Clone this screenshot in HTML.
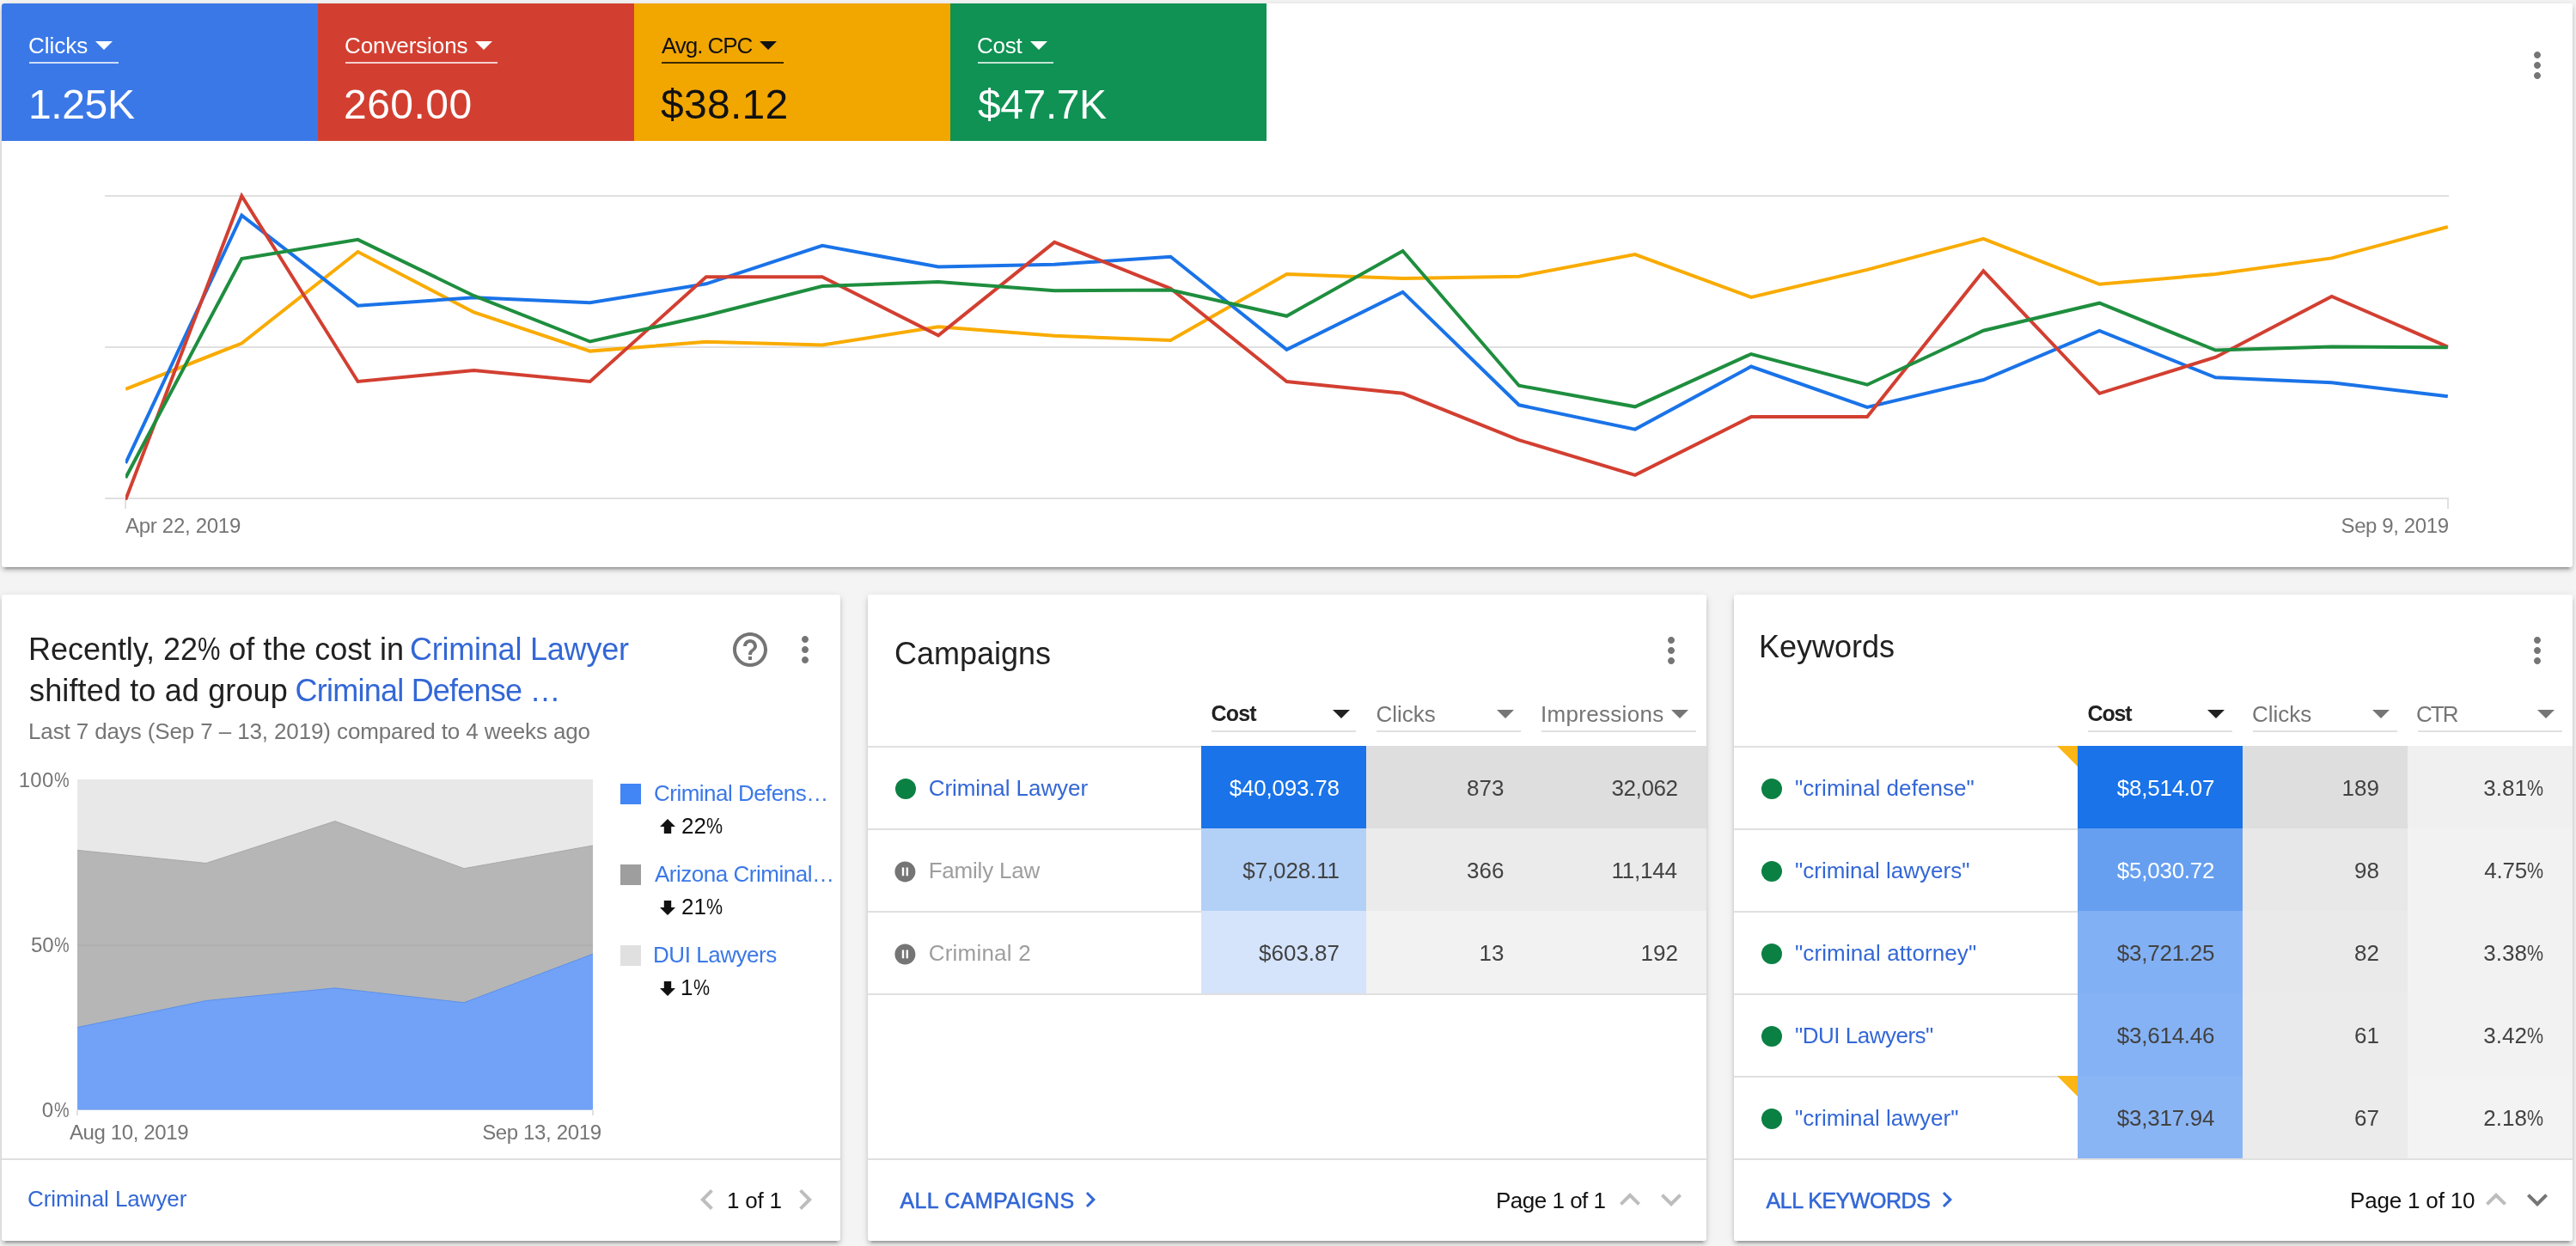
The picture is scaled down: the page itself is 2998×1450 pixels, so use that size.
<!DOCTYPE html>
<html><head><meta charset="utf-8"><title>Overview</title><style>
html,body{margin:0;padding:0}
body{width:2998px;height:1450px;background:#f4f4f4;overflow:hidden;position:relative;font-family:"Liberation Sans",sans-serif}
.b{position:absolute;display:block}
.t{position:absolute;white-space:pre;display:block}
.pc{display:inline-block;transform:scaleX(.824);transform-origin:0 50%;margin-right:-.156em}
#tx{position:absolute;left:0;top:0;width:2998px;height:1450px;will-change:transform}
.card{position:absolute;background:#fff;border-radius:3px;box-shadow:0 6px 2px -4px rgba(0,0,0,.2),0 4px 4px 0 rgba(0,0,0,.14),0 2px 10px 0 rgba(0,0,0,.12)}
</style></head><body>
<div class="card" style="left:2px;top:4px;width:2992px;height:656px"></div>
<div class="card" style="left:2px;top:692px;width:976px;height:752px"></div>
<div class="card" style="left:1010px;top:692px;width:976px;height:752px"></div>
<div class="card" style="left:2018px;top:692px;width:976px;height:752px"></div>
<div class="b" style="left:2px;top:4px;width:368px;height:160px;background:#3b78e7;border-top-left-radius:3px;"></div>
<div class="b" style="left:34px;top:72px;width:104px;height:2px;background:rgba(255,255,255,.75);"></div>
<div class="b" style="left:370px;top:4px;width:368px;height:160px;background:#d23f31;"></div>
<div class="b" style="left:402px;top:72px;width:177.4px;height:2px;background:rgba(255,255,255,.75);"></div>
<div class="b" style="left:738px;top:4px;width:368px;height:160px;background:#f2a600;"></div>
<div class="b" style="left:770px;top:72px;width:141.9px;height:2px;background:rgba(0,0,0,.75);"></div>
<div class="b" style="left:1106px;top:4px;width:368px;height:160px;background:#0f9254;"></div>
<div class="b" style="left:1138px;top:72px;width:87.7px;height:2px;background:rgba(255,255,255,.75);"></div>
<svg class="b" style="left:96.8px;top:27.8px" width="48" height="48" viewBox="0 0 24 24"><path d="M7 10l5 5 5-5z" fill="#fff"/></svg>
<svg class="b" style="left:538.5px;top:27.8px" width="48" height="48" viewBox="0 0 24 24"><path d="M7 10l5 5 5-5z" fill="#fff"/></svg>
<svg class="b" style="left:869.8px;top:27.8px" width="48" height="48" viewBox="0 0 24 24"><path d="M7 10l5 5 5-5z" fill="#111"/></svg>
<svg class="b" style="left:1185.3px;top:27.8px" width="48" height="48" viewBox="0 0 24 24"><path d="M7 10l5 5 5-5z" fill="#fff"/></svg>
<svg class="b" style="left:2929px;top:52px" width="48" height="48" viewBox="0 0 24 24"><path d="M12 8c1.1 0 2-.9 2-2s-.9-2-2-2-2 .9-2 2 .9 2 2 2zm0 2c-1.1 0-2 .9-2 2s.9 2 2 2 2-.9 2-2-.9-2-2-2zm0 6c-1.1 0-2 .9-2 2s.9 2 2 2 2-.9 2-2-.9-2-2-2z" fill="#757575"/></svg>
<svg class="b" style="left:0;top:0" width="2998" height="680" viewBox="0 0 2998 680"><defs><clipPath id="cp"><rect x="146" y="200" width="2704" height="400"/></clipPath></defs><rect x="122" y="227" width="2728" height="2" fill="#e0e0e0"/><rect x="122" y="403" width="2728" height="2" fill="#e0e0e0"/><rect x="122" y="579" width="2728" height="2" fill="#e0e0e0"/><rect x="145" y="580" width="2" height="12" fill="#e0e0e0"/><rect x="2848" y="580" width="2" height="12" fill="#e0e0e0"/><g clip-path="url(#cp)"><polyline points="146.2,452.8 281.3,399.5 416.5,293.0 551.6,363.5 686.7,408.6 821.8,397.8 957.0,401.5 1092.1,380.3 1227.2,390.7 1362.4,396.1 1497.5,319.0 1632.6,324.0 1767.8,321.7 1902.9,296.0 2038.0,345.9 2173.1,313.9 2308.3,277.8 2443.4,330.8 2578.5,319.0 2713.7,300.4 2848.8,264.0" fill="none" stroke="#f9ab00" stroke-width="4" stroke-linejoin="miter" stroke-linecap="butt"/><polyline points="146.2,539.0 281.3,250.6 416.5,355.7 551.6,346.3 686.7,352.3 821.8,330.3 957.0,285.9 1092.1,310.5 1227.2,307.8 1362.4,298.7 1497.5,406.9 1632.6,339.9 1767.8,471.3 1902.9,499.6 2038.0,426.5 2173.1,474.0 2308.3,442.0 2443.4,385.0 2578.5,439.3 2713.7,445.3 2848.8,461.2" fill="none" stroke="#1a73e8" stroke-width="4" stroke-linejoin="miter" stroke-linecap="butt"/><polyline points="146.2,581.5 281.3,228.0 416.5,444.0 551.6,430.9 686.7,444.0 821.8,322.3 957.0,322.3 1092.1,390.4 1227.2,281.9 1362.4,335.8 1497.5,444.0 1632.6,457.8 1767.8,512.1 1902.9,552.8 2038.0,485.1 2173.1,485.1 2308.3,315.3 2443.4,457.8 2578.5,415.7 2713.7,344.9 2848.8,403.6" fill="none" stroke="#d23f31" stroke-width="4" stroke-linejoin="miter" stroke-linecap="butt"/><polyline points="146.2,556.0 281.3,301.1 416.5,278.9 551.6,344.2 686.7,397.5 821.8,367.2 957.0,333.1 1092.1,328.0 1227.2,338.2 1362.4,337.5 1497.5,367.8 1632.6,292.0 1767.8,448.7 1902.9,473.3 2038.0,412.0 2173.1,447.7 2308.3,384.7 2443.4,352.7 2578.5,407.6 2713.7,403.6 2848.8,404.2" fill="none" stroke="#1e8e3e" stroke-width="4" stroke-linejoin="miter" stroke-linecap="butt"/></g></svg>
<svg class="b" style="left:849px;top:732px" width="48" height="48" viewBox="0 0 24 24"><path d="M11 18h2v-2h-2v2zm1-16C6.48 2 2 6.48 2 12s4.48 10 10 10 10-4.48 10-10S17.52 2 12 2zm0 18c-4.41 0-8-3.59-8-8s3.59-8 8-8 8 3.59 8 8-3.59 8-8 8zm0-14c-2.21 0-4 1.79-4 4h2c0-1.1.9-2 2-2s2 .9 2 2c0 2-3 1.75-3 5h2c0-2.25 3-2.5 3-5 0-2.21-1.79-4-4-4z" fill="#757575"/></svg>
<svg class="b" style="left:913px;top:732px" width="48" height="48" viewBox="0 0 24 24"><path d="M12 8c1.1 0 2-.9 2-2s-.9-2-2-2-2 .9-2 2 .9 2 2 2zm0 2c-1.1 0-2 .9-2 2s.9 2 2 2 2-.9 2-2-.9-2-2-2zm0 6c-1.1 0-2 .9-2 2s.9 2 2 2 2-.9 2-2-.9-2-2-2z" fill="#757575"/></svg>
<svg class="b" style="left:0;top:880px" width="1000" height="440" viewBox="0 880 1000 440"><rect x="90" y="907" width="600" height="384.5" fill="#e8e8e8"/><polygon points="90,989.4 240,1004.5 390,955.6 540,1010.7 690,984 690,1291.5 90,1291.5" fill="#b6b6b6"/><polyline points="90,989.4 240,1004.5 390,955.6 540,1010.7 690,984" fill="none" stroke="#a8a8a8" stroke-width="1"/><rect x="90" y="1099" width="600" height="2" fill="rgba(0,0,0,.035)"/><polygon points="90,1195.6 240,1164.5 390,1149.8 540,1166.8 690,1110.2 690,1291.5 90,1291.5" fill="#71a2f7"/><polyline points="90,1195.6 240,1164.5 390,1149.8 540,1166.8 690,1110.2" fill="none" stroke="#5b90ea" stroke-width="1"/><rect x="89" y="1291" width="2" height="7" fill="#e0e0e0"/><rect x="689" y="1291" width="2" height="7" fill="#e0e0e0"/></svg>
<div class="b" style="left:722px;top:912px;width:24px;height:24px;background:#4285f4;"></div>
<div class="b" style="left:722px;top:1006px;width:24px;height:24px;background:#9e9e9e;"></div>
<div class="b" style="left:722px;top:1100px;width:24px;height:24px;background:#e0e0e0;"></div>
<svg class="b" style="left:768px;top:952.8px" width="18" height="17" viewBox="0 0 18 17"><path d="M9 0 L18 9 H13.2 V17 H4.8 V9 H0 Z" fill="#111"/></svg>
<svg class="b" style="left:768px;top:1047.8px" width="18" height="17" viewBox="0 0 18 17"><path d="M9 17 L18 8 H13.2 V0 H4.8 V8 H0 Z" fill="#111"/></svg>
<svg class="b" style="left:768px;top:1141.8px" width="18" height="17" viewBox="0 0 18 17"><path d="M9 17 L18 8 H13.2 V0 H4.8 V8 H0 Z" fill="#111"/></svg>
<div class="b" style="left:2px;top:1348px;width:976px;height:2px;background:#e0e0e0;"></div>
<svg class="b" style="left:799px;top:1372px" width="48" height="48" viewBox="0 0 24 24"><path d="M15.41 7.41L14 6l-6 6 6 6 1.41-1.41L10.83 12z" fill="#bdbdbd"/></svg>
<svg class="b" style="left:913px;top:1372px" width="48" height="48" viewBox="0 0 24 24"><path d="M10 6L8.59 7.41 13.17 12l-4.58 4.59L10 18l6-6z" fill="#bdbdbd"/></svg>
<div class="b" style="left:1010px;top:868px;width:388px;height:2px;background:#e0e0e0;"></div><div class="b" style="left:1398px;top:868px;width:192px;height:96px;background:#1a73e8;"></div><div class="b" style="left:1590px;top:868px;width:192px;height:96px;background:#dedede;"></div><div class="b" style="left:1782px;top:868px;width:204px;height:96px;background:#dedede;"></div><div class="b" style="left:1010px;top:964px;width:388px;height:2px;background:#e0e0e0;"></div><div class="b" style="left:1398px;top:964px;width:192px;height:96px;background:#b3d0f7;"></div><div class="b" style="left:1590px;top:964px;width:192px;height:96px;background:#ebebeb;"></div><div class="b" style="left:1782px;top:964px;width:204px;height:96px;background:#ebebeb;"></div><div class="b" style="left:1010px;top:1060px;width:388px;height:2px;background:#e0e0e0;"></div><div class="b" style="left:1398px;top:1060px;width:192px;height:96px;background:#d5e4fb;"></div><div class="b" style="left:1590px;top:1060px;width:192px;height:96px;background:#f2f2f2;"></div><div class="b" style="left:1782px;top:1060px;width:204px;height:96px;background:#f2f2f2;"></div><div class="b" style="left:1010px;top:1156px;width:976px;height:2px;background:#e0e0e0;"></div>
<div class="b" style="left:2018px;top:868px;width:400px;height:2px;background:#e0e0e0;"></div><div class="b" style="left:2418px;top:868px;width:192px;height:96px;background:#1a73e8;"></div><div class="b" style="left:2610px;top:868px;width:192px;height:96px;background:#dedede;"></div><div class="b" style="left:2802px;top:868px;width:192px;height:96px;background:#f0f0f0;"></div><div class="b" style="left:2018px;top:964px;width:400px;height:2px;background:#e0e0e0;"></div><div class="b" style="left:2418px;top:964px;width:192px;height:96px;background:#669ff0;"></div><div class="b" style="left:2610px;top:964px;width:192px;height:96px;background:#e8e8e8;"></div><div class="b" style="left:2802px;top:964px;width:192px;height:96px;background:#f2f2f2;"></div><div class="b" style="left:2018px;top:1060px;width:400px;height:2px;background:#e0e0e0;"></div><div class="b" style="left:2418px;top:1060px;width:192px;height:96px;background:#82b0f4;"></div><div class="b" style="left:2610px;top:1060px;width:192px;height:96px;background:#eaeaea;"></div><div class="b" style="left:2802px;top:1060px;width:192px;height:96px;background:#f2f2f2;"></div><div class="b" style="left:2018px;top:1156px;width:400px;height:2px;background:#e0e0e0;"></div><div class="b" style="left:2418px;top:1156px;width:192px;height:96px;background:#85b2f4;"></div><div class="b" style="left:2610px;top:1156px;width:192px;height:96px;background:#ebebeb;"></div><div class="b" style="left:2802px;top:1156px;width:192px;height:96px;background:#f2f2f2;"></div><div class="b" style="left:2018px;top:1252px;width:400px;height:2px;background:#e0e0e0;"></div><div class="b" style="left:2418px;top:1252px;width:192px;height:96px;background:#8ab5f5;"></div><div class="b" style="left:2610px;top:1252px;width:192px;height:96px;background:#ebebeb;"></div><div class="b" style="left:2802px;top:1252px;width:192px;height:96px;background:#f3f3f3;"></div>
<div class="b" style="left:1410.3px;top:850px;width:167.3px;height:2px;background:#e0e0e0;"></div>
<div class="b" style="left:1602px;top:850px;width:167.8px;height:2px;background:#e0e0e0;"></div>
<div class="b" style="left:1794.3px;top:850px;width:179.3px;height:2px;background:#e0e0e0;"></div>
<div class="b" style="left:2429.7px;top:850px;width:168.1px;height:2px;background:#e0e0e0;"></div>
<div class="b" style="left:2621.8px;top:850px;width:168.2px;height:2px;background:#e0e0e0;"></div>
<div class="b" style="left:2813.6px;top:850px;width:168.1px;height:2px;background:#e0e0e0;"></div>
<svg class="b" style="left:1537px;top:806px" width="48" height="48" viewBox="0 0 24 24"><path d="M7 10l5 5 5-5z" fill="#212121"/></svg>
<svg class="b" style="left:1728px;top:806px" width="48" height="48" viewBox="0 0 24 24"><path d="M7 10l5 5 5-5z" fill="#757575"/></svg>
<svg class="b" style="left:1931px;top:806px" width="48" height="48" viewBox="0 0 24 24"><path d="M7 10l5 5 5-5z" fill="#757575"/></svg>
<svg class="b" style="left:2555.4px;top:806px" width="48" height="48" viewBox="0 0 24 24"><path d="M7 10l5 5 5-5z" fill="#212121"/></svg>
<svg class="b" style="left:2747px;top:806px" width="48" height="48" viewBox="0 0 24 24"><path d="M7 10l5 5 5-5z" fill="#757575"/></svg>
<svg class="b" style="left:2939px;top:806px" width="48" height="48" viewBox="0 0 24 24"><path d="M7 10l5 5 5-5z" fill="#757575"/></svg>
<svg class="b" style="left:1921px;top:732.5px" width="48" height="48" viewBox="0 0 24 24"><path d="M12 8c1.1 0 2-.9 2-2s-.9-2-2-2-2 .9-2 2 .9 2 2 2zm0 2c-1.1 0-2 .9-2 2s.9 2 2 2 2-.9 2-2-.9-2-2-2zm0 6c-1.1 0-2 .9-2 2s.9 2 2 2 2-.9 2-2-.9-2-2-2z" fill="#757575"/></svg>
<svg class="b" style="left:2929px;top:732.5px" width="48" height="48" viewBox="0 0 24 24"><path d="M12 8c1.1 0 2-.9 2-2s-.9-2-2-2-2 .9-2 2 .9 2 2 2zm0 2c-1.1 0-2 .9-2 2s.9 2 2 2 2-.9 2-2-.9-2-2-2zm0 6c-1.1 0-2 .9-2 2s.9 2 2 2 2-.9 2-2-.9-2-2-2z" fill="#757575"/></svg>
<div class="b" style="left:1042px;top:906px;width:24px;height:24px;border-radius:50%;background:#0b8043"></div>
<svg class="b" style="left:1039.4px;top:999.7px" width="28.8" height="28.8" viewBox="0 0 24 24"><path d="M12 2C6.48 2 2 6.48 2 12s4.48 10 10 10 10-4.48 10-10S17.52 2 12 2zm-1 14H9V8h2v8zm4 0h-2V8h2v8z" fill="#757575"/></svg>
<svg class="b" style="left:1039.4px;top:1095.7px" width="28.8" height="28.8" viewBox="0 0 24 24"><path d="M12 2C6.48 2 2 6.48 2 12s4.48 10 10 10 10-4.48 10-10S17.52 2 12 2zm-1 14H9V8h2v8zm4 0h-2V8h2v8z" fill="#757575"/></svg>
<div class="b" style="left:2050px;top:906px;width:24px;height:24px;border-radius:50%;background:#0b8043"></div>
<div class="b" style="left:2050px;top:1002px;width:24px;height:24px;border-radius:50%;background:#0b8043"></div>
<div class="b" style="left:2050px;top:1098px;width:24px;height:24px;border-radius:50%;background:#0b8043"></div>
<div class="b" style="left:2050px;top:1194px;width:24px;height:24px;border-radius:50%;background:#0b8043"></div>
<div class="b" style="left:2050px;top:1290px;width:24px;height:24px;border-radius:50%;background:#0b8043"></div>
<svg class="b" style="left:2394px;top:868px" width="24" height="24" viewBox="0 0 24 24"><path d="M0 0H24V24Z" fill="#fbb615"/></svg>
<svg class="b" style="left:2394px;top:1252px" width="24" height="24" viewBox="0 0 24 24"><path d="M0 0H24V24Z" fill="#fbb615"/></svg>
<div class="b" style="left:1010px;top:1348px;width:976px;height:2px;background:#e0e0e0;"></div>
<div class="b" style="left:2018px;top:1348px;width:976px;height:2px;background:#e0e0e0;"></div>
<svg class="b" style="left:1250.6px;top:1378.4px" width="36" height="36" viewBox="0 0 24 24"><path d="M10 6L8.59 7.41 13.17 12l-4.58 4.59L10 18l6-6z" fill="#3367d6"/></svg>
<svg class="b" style="left:2247.6px;top:1378.4px" width="36" height="36" viewBox="0 0 24 24"><path d="M10 6L8.59 7.41 13.17 12l-4.58 4.59L10 18l6-6z" fill="#3367d6"/></svg>
<svg class="b" style="left:1873px;top:1372px" width="48" height="48" viewBox="0 0 24 24"><path d="M7.41 15.41L12 10.83l4.59 4.58L18 14l-6-6-6 6z" fill="#bdbdbd"/></svg>
<svg class="b" style="left:1921px;top:1372px" width="48" height="48" viewBox="0 0 24 24"><path d="M7.41 8.59L12 13.17l4.59-4.58L18 10l-6 6-6-6 1.41-1.41z" fill="#bdbdbd"/></svg>
<svg class="b" style="left:2881px;top:1372px" width="48" height="48" viewBox="0 0 24 24"><path d="M7.41 15.41L12 10.83l4.59 4.58L18 14l-6-6-6 6z" fill="#bdbdbd"/></svg>
<svg class="b" style="left:2929px;top:1372px" width="48" height="48" viewBox="0 0 24 24"><path d="M7.41 8.59L12 13.17l4.59-4.58L18 10l-6 6-6-6 1.41-1.41z" fill="#757575"/></svg>
<div id="tx">
<span class="t" id="t0" style="top:39.99px;font-size:26px;line-height:26px;color:#fff;left:33.00px;">Clicks</span>
<span class="t" id="t1" style="top:97.87px;font-size:48px;line-height:48px;color:#fff;left:33.00px;letter-spacing:-0.375px;">1.25K</span>
<span class="t" id="t2" style="top:39.99px;font-size:26px;line-height:26px;color:#fff;left:401.00px;letter-spacing:-0.100px;">Conversions</span>
<span class="t" id="t3" style="top:97.87px;font-size:48px;line-height:48px;color:#fff;left:400.00px;letter-spacing:0.480px;">260.00</span>
<span class="t" id="t4" style="top:39.99px;font-size:26px;line-height:26px;color:#111;left:770.00px;letter-spacing:-1.060px;">Avg. CPC</span>
<span class="t" id="t5" style="top:97.87px;font-size:48px;line-height:48px;color:#111;left:769.00px;letter-spacing:0.280px;">$38.12</span>
<span class="t" id="t6" style="top:39.99px;font-size:26px;line-height:26px;color:#fff;left:1137.00px;letter-spacing:-0.269px;">Cost</span>
<span class="t" id="t7" style="top:97.87px;font-size:48px;line-height:48px;color:#fff;left:1138.00px;letter-spacing:-0.400px;">$47.7K</span>
<span class="t" id="t8" style="top:599.68px;font-size:24px;line-height:24px;color:#757575;left:146.00px;letter-spacing:-0.290px;">Apr 22, 2019</span>
<span class="t" id="t9" style="top:599.68px;font-size:24px;line-height:24px;color:#757575;right:148.40px;letter-spacing:-0.400px;">Sep 9, 2019</span>
<span class="t" id="l1a" style="top:738.03px;font-size:36px;line-height:36px;color:#212121;left:33.00px;letter-spacing:-0.035px;">Recently, 22<span class="pc">%</span> of the cost in</span>
<span class="t" id="l1b" style="top:738.03px;font-size:36px;line-height:36px;color:#3367d6;left:476.90px;letter-spacing:-0.214px;">Criminal Lawyer</span>
<span class="t" id="l2a" style="top:785.53px;font-size:36px;line-height:36px;color:#212121;left:34.00px;letter-spacing:0.143px;">shifted to ad group</span>
<span class="t" id="l2b" style="top:785.53px;font-size:36px;line-height:36px;color:#3367d6;left:343.50px;letter-spacing:-0.765px;">Criminal Defense …</span>
<span class="t" id="t14" style="top:838.49px;font-size:26px;line-height:26px;color:#757575;left:33.00px;letter-spacing:-0.122px;">Last 7 days (Sep 7 – 13, 2019) compared to 4 weeks ago</span>
<span class="t" id="t15" style="top:895.68px;font-size:24px;line-height:24px;color:#757575;right:2917.53px;letter-spacing:0.267px;">100<span class="pc">%</span></span>
<span class="t" id="t16" style="top:1088.28px;font-size:24px;line-height:24px;color:#757575;right:2917.80px;">50<span class="pc">%</span></span>
<span class="t" id="t17" style="top:1279.88px;font-size:24px;line-height:24px;color:#757575;right:2917.40px;letter-spacing:0.400px;">0<span class="pc">%</span></span>
<span class="t" id="t18" style="top:1306.08px;font-size:24px;line-height:24px;color:#757575;left:81.00px;letter-spacing:-0.384px;">Aug 10, 2019</span>
<span class="t" id="t19" style="top:1306.08px;font-size:24px;line-height:24px;color:#757575;right:2298.36px;letter-spacing:-0.364px;">Sep 13, 2019</span>
<span class="t" id="t20" style="top:909.99px;font-size:26px;line-height:26px;color:#3b78e7;left:761.00px;letter-spacing:-0.517px;">Criminal Defens…</span>
<span class="t" id="t21" style="top:1004.29px;font-size:26px;line-height:26px;color:#3b78e7;left:762.00px;letter-spacing:-0.479px;">Arizona Criminal…</span>
<span class="t" id="t22" style="top:1097.99px;font-size:26px;line-height:26px;color:#3b78e7;left:760.00px;letter-spacing:-0.460px;">DUI Lawyers</span>
<span class="t" id="t23" style="top:947.99px;font-size:26px;line-height:26px;color:#111;left:793.00px;">22<span class="pc">%</span></span>
<span class="t" id="t24" style="top:1041.99px;font-size:26px;line-height:26px;color:#111;left:793.00px;">21<span class="pc">%</span></span>
<span class="t" id="t25" style="top:1135.99px;font-size:26px;line-height:26px;color:#111;left:792.00px;letter-spacing:1.000px;">1<span class="pc">%</span></span>
<span class="t" id="t26" style="top:1381.99px;font-size:26px;line-height:26px;color:#3367d6;left:32.00px;letter-spacing:-0.071px;">Criminal Lawyer</span>
<span class="t" id="t27" style="top:1383.79px;font-size:26px;line-height:26px;color:#111;left:846.00px;letter-spacing:-0.200px;">1 of 1</span>
<span class="t" id="t28" style="top:742.53px;font-size:36px;line-height:36px;color:#212121;left:1041.00px;">Campaigns</span>
<span class="t" id="t29" style="top:818.44px;font-size:25px;line-height:25px;color:#212121;left:1409.50px;font-weight:700;letter-spacing:-0.801px;">Cost</span>
<span class="t" id="t30" style="top:817.59px;font-size:26px;line-height:26px;color:#757575;left:1601.50px;">Clicks</span>
<span class="t" id="t31" style="top:817.59px;font-size:26px;line-height:26px;color:#757575;left:1793.00px;letter-spacing:0.300px;">Impressions</span>
<span class="t" id="t32" style="top:904.39px;font-size:26px;line-height:26px;color:#3367d6;left:1080.70px;letter-spacing:-0.071px;">Criminal Lawyer</span>
<span class="t" id="t33" style="top:904.39px;font-size:26px;line-height:26px;color:#fff;right:1439.22px;letter-spacing:-0.222px;">$40,093.78</span>
<span class="t" id="t34" style="top:904.39px;font-size:26px;line-height:26px;color:#424242;right:1247.50px;">873</span>
<span class="t" id="t35" style="top:904.39px;font-size:26px;line-height:26px;color:#424242;right:1045.40px;letter-spacing:-0.400px;">32,062</span>
<span class="t" id="t36" style="top:1000.39px;font-size:26px;line-height:26px;color:#9e9e9e;left:1080.70px;letter-spacing:-0.223px;">Family Law</span>
<span class="t" id="t37" style="top:1000.39px;font-size:26px;line-height:26px;color:#424242;right:1439.13px;letter-spacing:-0.130px;">$7,028.11</span>
<span class="t" id="t38" style="top:1000.39px;font-size:26px;line-height:26px;color:#424242;right:1247.50px;">366</span>
<span class="t" id="t39" style="top:1000.39px;font-size:26px;line-height:26px;color:#424242;right:1046.20px;letter-spacing:-0.200px;">11,144</span>
<span class="t" id="t40" style="top:1096.39px;font-size:26px;line-height:26px;color:#9e9e9e;left:1080.70px;letter-spacing:0.222px;">Criminal 2</span>
<span class="t" id="t41" style="top:1096.39px;font-size:26px;line-height:26px;color:#424242;right:1439.00px;">$603.87</span>
<span class="t" id="t42" style="top:1096.39px;font-size:26px;line-height:26px;color:#424242;right:1247.50px;">13</span>
<span class="t" id="t43" style="top:1096.39px;font-size:26px;line-height:26px;color:#424242;right:1045.00px;">192</span>
<span class="t" id="t44" style="top:1384.84px;font-size:25px;line-height:25px;color:#3367d6;left:1047.50px;-webkit-text-stroke:0.55px #3367d6;letter-spacing:0.332px;">ALL CAMPAIGNS</span>
<span class="t" id="t45" style="top:1383.79px;font-size:26px;line-height:26px;color:#111;left:1741.00px;letter-spacing:-0.500px;">Page 1 of 1</span>
<span class="t" id="t46" style="top:734.93px;font-size:36px;line-height:36px;color:#212121;left:2047.00px;">Keywords</span>
<span class="t" id="t47" style="top:818.44px;font-size:25px;line-height:25px;color:#212121;left:2429.50px;font-weight:700;letter-spacing:-1.136px;">Cost</span>
<span class="t" id="t48" style="top:817.59px;font-size:26px;line-height:26px;color:#757575;left:2621.00px;">Clicks</span>
<span class="t" id="t49" style="top:817.59px;font-size:26px;line-height:26px;color:#757575;left:2812.00px;letter-spacing:-2.000px;">CTR</span>
<span class="t" id="t50" style="top:904.39px;font-size:26px;line-height:26px;color:#3367d6;left:2089.00px;letter-spacing:0.058px;">"criminal defense"</span>
<span class="t" id="t51" style="top:904.39px;font-size:26px;line-height:26px;color:#fff;right:420.75px;letter-spacing:-0.250px;">$8,514.07</span>
<span class="t" id="t52" style="top:904.39px;font-size:26px;line-height:26px;color:#424242;right:229.00px;">189</span>
<span class="t" id="t53" style="top:904.39px;font-size:26px;line-height:26px;color:#424242;right:38.00px;">3.81<span class="pc">%</span></span>
<span class="t" id="t54" style="top:1000.39px;font-size:26px;line-height:26px;color:#3367d6;left:2089.00px;">"criminal lawyers"</span>
<span class="t" id="t55" style="top:1000.39px;font-size:26px;line-height:26px;color:#fff;right:420.75px;letter-spacing:-0.250px;">$5,030.72</span>
<span class="t" id="t56" style="top:1000.39px;font-size:26px;line-height:26px;color:#424242;right:229.00px;">98</span>
<span class="t" id="t57" style="top:1000.39px;font-size:26px;line-height:26px;color:#424242;right:38.25px;letter-spacing:-0.250px;">4.75<span class="pc">%</span></span>
<span class="t" id="t58" style="top:1096.39px;font-size:26px;line-height:26px;color:#3367d6;left:2089.00px;letter-spacing:0.112px;">"criminal attorney"</span>
<span class="t" id="t59" style="top:1096.39px;font-size:26px;line-height:26px;color:#424242;right:420.75px;letter-spacing:-0.250px;">$3,721.25</span>
<span class="t" id="t60" style="top:1096.39px;font-size:26px;line-height:26px;color:#424242;right:229.00px;">82</span>
<span class="t" id="t61" style="top:1096.39px;font-size:26px;line-height:26px;color:#424242;right:38.00px;">3.38<span class="pc">%</span></span>
<span class="t" id="t62" style="top:1192.39px;font-size:26px;line-height:26px;color:#3367d6;left:2089.00px;letter-spacing:-0.500px;">"DUI Lawyers"</span>
<span class="t" id="t63" style="top:1192.39px;font-size:26px;line-height:26px;color:#424242;right:420.75px;letter-spacing:-0.250px;">$3,614.46</span>
<span class="t" id="t64" style="top:1192.39px;font-size:26px;line-height:26px;color:#424242;right:229.00px;">61</span>
<span class="t" id="t65" style="top:1192.39px;font-size:26px;line-height:26px;color:#424242;right:38.00px;">3.42<span class="pc">%</span></span>
<span class="t" id="t66" style="top:1288.39px;font-size:26px;line-height:26px;color:#3367d6;left:2089.00px;">"criminal lawyer"</span>
<span class="t" id="t67" style="top:1288.39px;font-size:26px;line-height:26px;color:#424242;right:420.75px;letter-spacing:-0.250px;">$3,317.94</span>
<span class="t" id="t68" style="top:1288.39px;font-size:26px;line-height:26px;color:#424242;right:229.00px;">67</span>
<span class="t" id="t69" style="top:1288.39px;font-size:26px;line-height:26px;color:#424242;right:38.00px;">2.18<span class="pc">%</span></span>
<span class="t" id="t70" style="top:1384.84px;font-size:25px;line-height:25px;color:#3367d6;left:2055.50px;-webkit-text-stroke:0.55px #3367d6;letter-spacing:-0.455px;">ALL KEYWORDS</span>
<span class="t" id="t71" style="top:1383.79px;font-size:26px;line-height:26px;color:#111;left:2735.00px;letter-spacing:-0.182px;">Page 1 of 10</span>
</div>
</body></html>
